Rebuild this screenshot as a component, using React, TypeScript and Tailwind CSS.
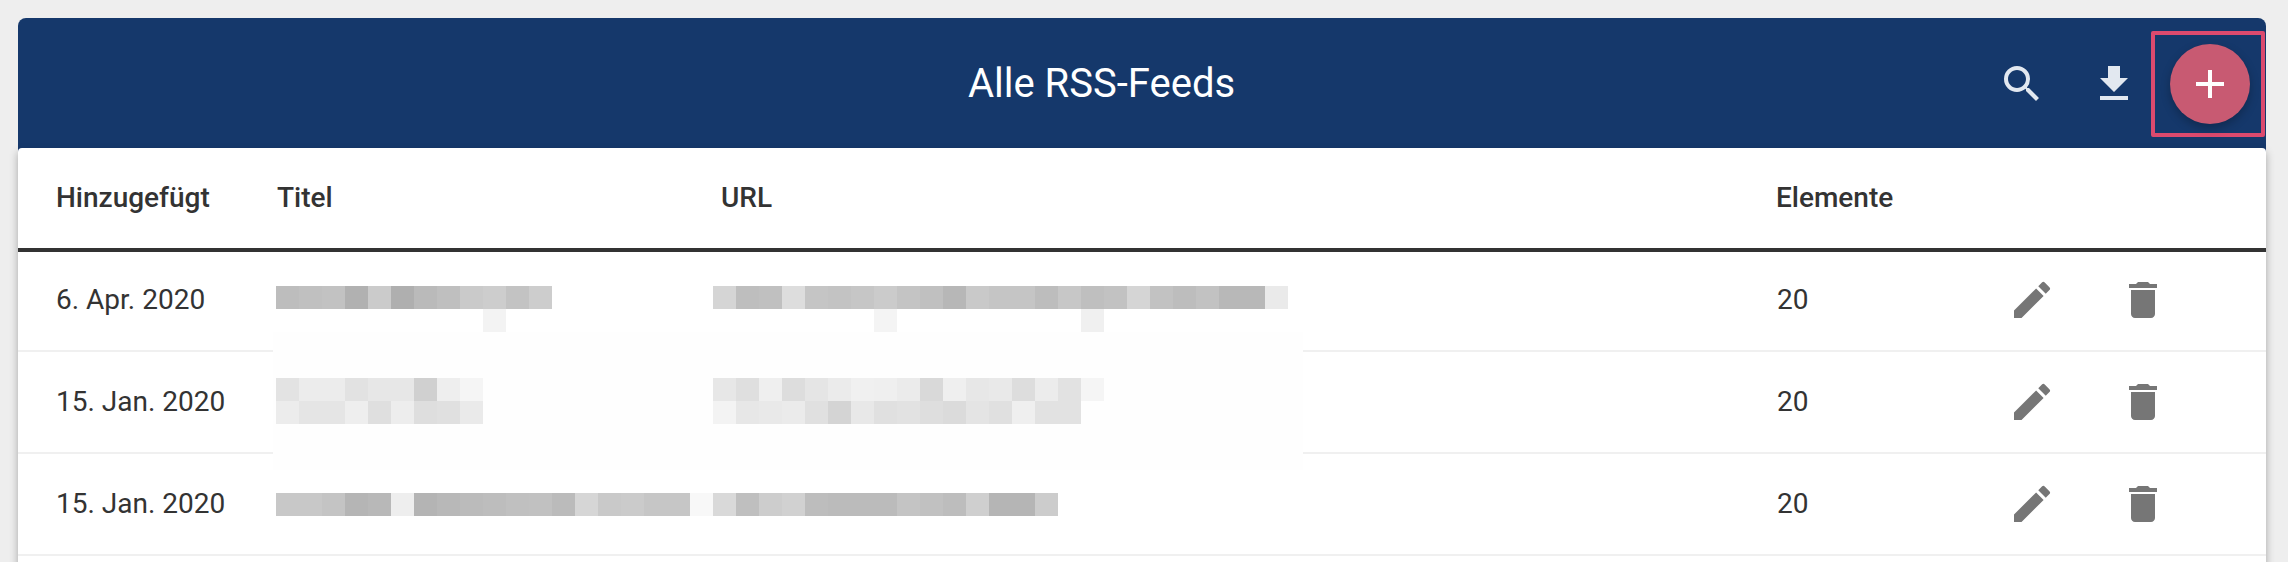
import { MdAdd, MdDelete, MdEdit, MdGetApp, MdSearch } from 'react-icons/md';

type Block = { top: string[]; bottom?: string[] };

const rows: { date: string; offset: string; title: Block; url: Block }[] = [
  {
    date: '6. Apr. 2020',
    offset: 'mt-[36px]',
    title: {
      top: ['#bdbdbd', '#c0c0c0', '#c2c2c2', '#b1b1b1', '#cbcbcb', '#afafaf', '#bababa', '#bfbfbf', '#cacaca', '#cdcdcd', '#c3c3c3', '#cdcdcd'],
      bottom: ['#fff', '#fff', '#fff', '#fff', '#fff', '#fff', '#fff', '#fff', '#fff', '#f3f3f3'],
    },
    url: {
      top: ['#d5d5d5', '#bebebe', '#c0c0c0', '#dddddd', '#c5c5c5', '#c3c3c3', '#c6c6c6', '#cbcbcb', '#c4c4c4', '#c0c0c0', '#b7b7b7', '#c9c9c9', '#c5c5c5', '#c5c5c5', '#bdbdbd', '#c7c7c7', '#bfbfbf', '#c2c2c2', '#d5d5d5', '#c2c2c2', '#bdbdbd', '#c2c2c2', '#b8b8b8', '#b8b8b8', '#eaeaea'],
      bottom: ['#fff', '#fff', '#fff', '#fff', '#fff', '#fff', '#fff', '#f4f4f4', '#fff', '#fff', '#fff', '#fff', '#fff', '#fff', '#fff', '#fff', '#f0f0f0'],
    },
  },
  {
    date: '15. Jan. 2020',
    offset: 'mt-[26px]',
    title: {
      top: ['#e3e3e3', '#ececec', '#ececec', '#e2e2e2', '#e7e7e7', '#e7e7e7', '#d0d0d0', '#eeeeee', '#f5f5f5'],
      bottom: ['#ececec', '#e5e5e5', '#e5e5e5', '#eeeeee', '#dfdfdf', '#ededed', '#dedede', '#e0e0e0', '#eaeaea'],
    },
    url: {
      top: ['#e7e7e7', '#dfdfdf', '#efefef', '#dddddd', '#e5e5e5', '#ebebeb', '#f0f0f0', '#efefef', '#ebebeb', '#d9d9d9', '#efefef', '#e7e7e7', '#e9e9e9', '#dddddd', '#ececec', '#e2e2e2', '#f5f5f5'],
      bottom: ['#f3f3f3', '#e7e7e7', '#e9e9e9', '#ebebeb', '#e0e0e0', '#d4d4d4', '#e8e8e8', '#e0e0e0', '#e2e2e2', '#dedede', '#dbdbdb', '#e4e4e4', '#e0e0e0', '#efefef', '#e2e2e2', '#e2e2e2'],
    },
  },
  {
    date: '15. Jan. 2020',
    offset: 'mt-[39px]',
    title: {
      top: ['#c8c8c8', '#c8c8c8', '#c4c4c4', '#b5b5b5', '#b8b8b8', '#eeeeee', '#b4b4b4', '#b8b8b8', '#bbbbbb', '#bdbdbd', '#c0c0c0', '#c1c1c1', '#bbbbbb', '#d6d6d6', '#c9c9c9', '#cbcbcb', '#c6c6c6', '#c6c6c6', '#f8f8f8'],
    },
    url: {
      top: ['#d9d9d9', '#bfbfbf', '#cdcdcd', '#d1d1d1', '#bdbdbd', '#bbbbbb', '#bbbbbb', '#bbbbbb', '#c4c4c4', '#c1c1c1', '#bdbdbd', '#cfcfcf', '#b5b5b5', '#b5b5b5', '#cccccc'],
    },
  },
];

const Mosaic = ({ block }: { block: Block }) => (
  <div className="relative z-10 flex flex-col">
    {[block.top, block.bottom ?? []].map((line, i) => (
      <div key={i} className="flex h-[23px]">
        {line.map((color, j) => (
          <div key={j} className="w-[23px]" style={{ backgroundColor: color }} />
        ))}
      </div>
    ))}
  </div>
);

export default function App() {
  return (
    <div className="h-[562px] overflow-hidden bg-[#eeeeee] pl-[18px] pr-[22px] pt-[18px] font-['Roboto',sans-serif] text-[#333333]">
      {/* HEADER */}
      <div className="relative flex h-[134px] items-center rounded-t-lg bg-[#15386b] pb-[2px]">
        <h1 className="w-[2167px] text-center text-[40px] text-white">Alle RSS-Feeds</h1>
        <MdSearch className="absolute left-[1980px] top-[42px] text-[48px] text-[#e2e8f0]" />
        <MdGetApp className="absolute left-[2072px] top-[42px] text-[48px] text-[#e2e8f0]" />
        <div className="absolute left-[2133px] top-[13px] flex h-[106px] w-[114px] items-center justify-center rounded-[2px] border-4 border-[#dc4a6e] pl-1">
          <div className="flex h-20 w-20 items-center justify-center rounded-full bg-[#c85a72] shadow-[0_4px_10px_rgba(0,0,0,0.25)]">
            <MdAdd className="text-[48px] text-white" />
          </div>
        </div>
      </div>

      <div className="relative -mt-1 rounded-t bg-white shadow-[0_4px_8px_rgba(0,0,0,0.3)]">
        {/* TABLE HEAD */}
        <div className="relative z-20 -mb-[2px] flex h-[104px] items-center border-b-4 border-[#333333] text-[28px] font-medium">
          <div className="w-[259px] pl-[38px]">Hinzugefügt</div>
          <div className="w-[444px]">Titel</div>
          <div className="w-[1055px]">URL</div>
          <div>Elemente</div>
        </div>

        {/* ROWS */}
        <div className="relative">
          {/* wiped band left over from the blur, it hides the row lines */}
          <div className="absolute left-[255px] top-[82px] h-[138px] w-[1030px] bg-[#fefefe]" />
          {rows.map((row, i) => (
            <div key={i} className="flex h-[102px] items-center border-b-2 border-[#f0f0f0] text-[28px]">
              <div className="w-[258px] pl-[38px]">{row.date}</div>
              <div className={`w-[437px] self-start ${row.offset}`}><Mosaic block={row.title} /></div>
              <div className={`w-[1064px] self-start ${row.offset}`}><Mosaic block={row.url} /></div>
              <div className="w-[231px]">20</div>
              <MdEdit className="text-[48px] text-[#767676]" />
              <MdDelete className="ml-[63px] text-[48px] text-[#767676]" />
            </div>
          ))}
          <div className="h-[102px]" />
        </div>
      </div>
    </div>
  );
}
